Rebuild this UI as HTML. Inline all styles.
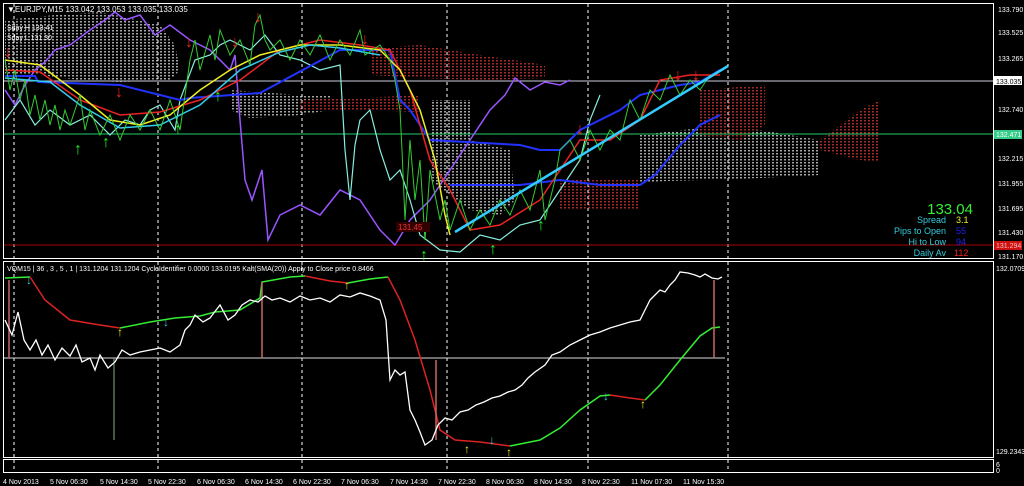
<!DOCTYPE html>
<html><head><meta charset="utf-8"><style>
body{margin:0;background:#000;width:1024px;height:486px;overflow:hidden;font-family:"Liberation Sans",sans-serif}
svg{display:block}
text{font-family:"Liberation Sans",sans-serif}
</style></head><body>
<svg width="1024" height="486" viewBox="0 0 1024 486">
<defs>
<pattern id="pw" width="4" height="3" patternUnits="userSpaceOnUse"><rect width="2" height="1.5" fill="#ccc"/></pattern>
<pattern id="pr" width="4" height="3" patternUnits="userSpaceOnUse"><rect width="2" height="1.5" fill="#c33"/></pattern>
</defs>
<rect width="1024" height="486" fill="#000"/>
<rect x="3.5" y="3.5" width="990" height="255" fill="none" stroke="#fff" stroke-width="1"/>
<rect x="3.5" y="261.5" width="990" height="196" fill="none" stroke="#fff" stroke-width="1"/>
<rect x="3.5" y="459.5" width="990" height="13" fill="none" stroke="#fff" stroke-width="1"/>
<g opacity="0.8">
<path d="M5 20 L55 15 L100 12 L130 18 L160 25 L175 45 L180 70 L170 80 L120 82 L80 80 L40 75 L5 75Z" fill="url(#pw)"/>
<path d="M230 90 L300 95 L330 95 L330 110 L300 115 L250 118 L230 110Z" fill="url(#pw)"/>
<path d="M370 48 L420 45 L480 55 L545 65 L545 78 L480 80 L420 78 L370 75Z" fill="url(#pr)"/>
<path d="M300 100 L360 98 L420 95 L420 112 L360 110 L300 110Z" fill="url(#pr)"/>
<path d="M430 100 L470 100 L470 140 L510 150 L515 200 L500 215 L470 210 L450 195 L430 180Z" fill="url(#pw)"/>
<path d="M560 180 L640 180 L640 210 L560 210Z" fill="url(#pr)"/>
<path d="M640 135 L700 128 L760 130 L820 140 L820 175 L760 178 L700 180 L640 182Z" fill="url(#pw)"/>
<path d="M700 90 L765 85 L765 125 L740 140 L700 135Z" fill="url(#pr)"/>
<path d="M820 140 L840 125 L860 110 L880 100 L880 162 L860 160 L820 150Z" fill="url(#pr)"/>
</g>
<g stroke="#fff" stroke-dasharray="3,3" stroke-width="1">
<line x1="14" y1="4" x2="14" y2="472"/><line x1="158" y1="4" x2="158" y2="472"/>
<line x1="302" y1="4" x2="302" y2="472"/><line x1="447" y1="4" x2="447" y2="472"/>
<line x1="588" y1="4" x2="588" y2="472"/><line x1="728" y1="4" x2="728" y2="472"/>
</g>
<line x1="4" y1="81" x2="993" y2="81" stroke="#ccd"/>
<line x1="4" y1="134" x2="993" y2="134" stroke="#2c6"/>
<line x1="4" y1="245" x2="993" y2="245" stroke="#a00"/>
<polyline fill="none" stroke="#95f" stroke-width="1.5" points="5,90 15,105 25,85 35,70 45,62 55,50 70,45 90,30 105,20 115,12 125,20 140,15 155,35 170,25 190,40 210,50 230,70 235,55 240,120 245,180 252,200 262,170 268,240 280,215 300,205 320,215 340,190 360,200 380,230 395,245 410,220 430,200 450,170 470,140 490,110 505,95 515,78 530,90 545,82 560,85 570,80"/>
<polyline fill="none" stroke="#8ed" stroke-width="1.2" points="5,120 20,100 35,125 50,110 70,125 90,115 110,135 125,120 140,125 150,110 160,105 175,130 180,100 195,60 210,55 220,45 230,40 250,50 265,35 280,55 300,60 320,70 340,65 345,150 350,200 355,145 360,120 370,110 380,150 390,180 400,170 410,200 420,235 440,250 460,252 480,235 500,240 520,225 540,220 560,190 580,160 590,120 600,95"/>
<polyline fill="none" stroke="#23f" stroke-width="2" points="5,76 35,76 38,82 120,85 180,100 190,98 260,93 340,50 390,50 400,100 410,110 430,140 520,145 540,150 560,150 580,130 600,120 620,110 640,95 660,90 680,85 700,82 720,70"/>
<polyline fill="none" stroke="#23f" stroke-width="2" points="450,185 520,185 560,180 600,185 640,185 655,175 680,145 700,125 720,115"/>
<polyline fill="none" stroke="#e22" stroke-width="1.5" points="5,70 40,72 80,100 120,115 160,112 200,100 240,80 280,50 320,40 360,45 390,50 410,90 430,160 450,190 470,230 500,225 540,200 560,170 580,140 610,140 640,120 660,80 690,75 720,75"/>
<polyline fill="none" stroke="#ee2" stroke-width="1.5" points="5,60 40,65 80,95 110,120 140,125 170,115 200,90 230,70 260,55 300,45 340,45 380,50 400,70 420,110 435,160 445,215 450,235"/>
<polyline fill="none" stroke="#3ce" stroke-width="1.5" points="5,78 50,82 80,105 120,128 160,125 200,105 240,70 280,52 310,45 340,48 380,55"/>
<polyline fill="none" stroke="#3c3" stroke-width="1" points="5,60 10,90 15,70 20,100 25,80 30,115 35,95 40,120 45,100 50,125 55,105 60,130 65,110 70,125 80,95 85,130 90,110 100,135 110,115 120,140 130,115 140,130 150,110 160,130 170,100 180,130 190,60 195,40 200,70 210,35 215,60 220,30 230,55 240,40 250,65 255,25 260,15 265,40 270,50 280,40 290,60 300,40 310,55 320,35 330,60 340,40 350,55 360,30 365,55 380,45 390,60 395,80 400,110 402,150 405,220 410,140 415,200 420,160 425,240 430,170 440,220 445,200 450,230 460,200 470,230 480,210 490,225 500,200 510,215 520,190 530,210 540,170 545,220 555,180 560,150 570,140 580,160 590,130 600,150 610,130 620,140 630,100 640,120 650,90 660,100 670,75 680,95 690,80 700,90 710,75"/>
<line x1="455" y1="232" x2="728" y2="66" stroke="#3cf" stroke-width="2.5"/>
<g font-size="16" font-weight="bold" fill="#2e2"><text x="74" y="154">↑</text><text x="102" y="147">↑</text><text x="174" y="134">↑</text><text x="214" y="101">↑</text><text x="420" y="260">↑</text><text x="489" y="254">↑</text><text x="537" y="230">↑</text></g>
<g font-size="16" font-weight="bold" fill="#e22"><text x="254" y="22">↓</text><text x="185" y="47">↓</text><text x="231" y="47">↓</text><text x="361" y="44">↓</text><text x="115" y="97">↓</text><text x="576" y="134">↓</text><text x="674" y="80">↓</text><text x="692" y="80">↓</text><text x="4" y="57">↓</text></g>
<text x="7" y="12" font-size="8" fill="#fff">▼EURJPY,M15  133.042 133.053 133.035 133.035</text>
<text x="7" y="30" font-size="7" fill="#fff">Sday H 133.41</text>
<text x="7" y="40" font-size="7" fill="#fff">Sday L 131.30</text>
<rect x="396" y="222" width="34" height="10" fill="#300"/><text x="398" y="230" font-size="8" fill="#e33">131.45</text>
<text x="973" y="214" font-size="15" fill="#3e3" text-anchor="end">133.04</text>
<text x="946" y="223" font-size="9" fill="#3cd" text-anchor="end">Spread</text><text x="956" y="223" font-size="9" fill="#ee2">3.1</text>
<text x="946" y="234" font-size="9" fill="#3cd" text-anchor="end">Pips to Open</text><text x="956" y="234" font-size="9" fill="#22e">55</text>
<text x="946" y="245" font-size="9" fill="#3cd" text-anchor="end">Hi to Low</text><text x="956" y="245" font-size="9" fill="#22e">94</text>
<text x="946" y="256" font-size="9" fill="#3cd" text-anchor="end">Daily Av</text><text x="954" y="256" font-size="9" fill="#e22">112</text>
<g font-size="7" fill="#fff">
<text x="998" y="12">133.790</text><text x="998" y="35">133.525</text><text x="998" y="61">133.265</text>
<text x="998" y="112">132.740</text><text x="998" y="161">132.215</text><text x="998" y="186">131.955</text>
<text x="998" y="211">131.695</text><text x="998" y="235">131.430</text><text x="998" y="259">131.170</text>
<text x="996" y="271">132.0709</text><text x="996" y="454">129.2343</text>
<text x="996" y="467">6</text><text x="996" y="473">0</text>
</g>
<rect x="994" y="76" width="28" height="9" fill="#fff"/><text x="996" y="84" font-size="7" fill="#000">133.035</text>
<rect x="994" y="130" width="28" height="9" fill="#3c8"/><text x="996" y="137" font-size="7" fill="#fff">132.471</text>
<rect x="994" y="241" width="28" height="9" fill="#c11"/><text x="996" y="248" font-size="7" fill="#fbb">131.294</text>
<text x="7" y="271" font-size="7" fill="#fff">VQM15 | 36 , 3 , 5 , 1 | 131.1204 131.1204  CycleIdentifier 0.0000 133.0195  Kalt(SMA(20)) Apply to Close price 0.8466</text>
<line x1="4" y1="358" x2="725" y2="358" stroke="#ddd"/>
<polyline fill="none" stroke="#3e3" stroke-width="1.5" points="5,278 30,277"/>
<polyline fill="none" stroke="#d22" stroke-width="1.5" points="30,277 45,300 70,320 100,325 120,328"/>
<polyline fill="none" stroke="#3e3" stroke-width="1.5" points="120,328 150,322 175,318 200,316 215,312 240,310 260,298 262,282 290,277 305,276"/>
<polyline fill="none" stroke="#d22" stroke-width="1.5" points="305,276 330,281 348,283"/>
<polyline fill="none" stroke="#3e3" stroke-width="1.5" points="348,283 370,279 388,277"/>
<polyline fill="none" stroke="#d22" stroke-width="1.5" points="388,277 400,300 415,340 430,390 440,430 455,440 480,442 510,446"/>
<polyline fill="none" stroke="#3e3" stroke-width="1.5" points="510,446 540,440 560,428 580,410 600,396 610,395"/>
<polyline fill="none" stroke="#d22" stroke-width="1.5" points="610,395 630,398 645,400"/>
<polyline fill="none" stroke="#3e3" stroke-width="1.5" points="645,400 660,385 680,360 700,336 712,328 720,327"/>
<g stroke="#c66" stroke-width="1.5"><line x1="9" y1="280" x2="9" y2="358"/><line x1="262" y1="282" x2="262" y2="358"/><line x1="436" y1="360" x2="436" y2="440"/><line x1="714" y1="280" x2="714" y2="358"/></g>
<line x1="114" y1="358" x2="114" y2="440" stroke="#8a8"/>
<polyline fill="none" stroke="#fff" stroke-width="1.3" points="5,320 12,335 18,312 24,340 30,350 36,340 42,355 48,345 55,360 62,348 70,356 76,345 82,362 90,358 95,370 100,355 108,368 115,362 122,350 130,355 140,352 150,350 160,348 170,352 180,345 185,330 190,325 195,315 203,322 210,318 220,305 228,320 235,315 242,305 250,300 258,302 265,296 272,300 280,298 290,302 300,296 310,300 320,298 330,302 340,295 350,297 360,293 370,296 380,300 386,320 390,380 395,370 400,375 405,372 410,410 415,420 420,432 425,445 432,440 438,425 445,418 452,420 460,412 468,410 476,405 484,402 492,398 500,396 508,392 515,390 522,385 528,378 535,372 545,365 552,355 560,352 570,345 580,340 590,335 600,332 610,328 620,325 630,322 640,320 645,310 650,300 655,295 660,290 665,292 670,285 675,280 680,272 688,273 695,275 700,277 705,274 712,278 718,279 722,277"/>
<g font-size="12" font-weight="bold"><text x="26" y="284" fill="#3cd">↓</text><text x="163" y="326" fill="#3cd">↓</text><text x="489" y="444" fill="#3cd">↓</text><text x="603" y="400" fill="#3cd">↓</text><text x="117" y="336" fill="#ee2">↑</text><text x="344" y="289" fill="#ee2">↑</text><text x="464" y="453" fill="#ee2">↑</text><text x="506" y="456" fill="#ee2">↑</text><text x="640" y="408" fill="#ee2">↑</text></g>
<g font-size="7" fill="#fff"><text x="3" y="484">4 Nov 2013</text><text x="50" y="484">5 Nov 06:30</text><text x="100" y="484">5 Nov 14:30</text><text x="148" y="484">5 Nov 22:30</text><text x="197" y="484">6 Nov 06:30</text><text x="245" y="484">6 Nov 14:30</text><text x="293" y="484">6 Nov 22:30</text><text x="341" y="484">7 Nov 06:30</text><text x="390" y="484">7 Nov 14:30</text><text x="438" y="484">7 Nov 22:30</text><text x="486" y="484">8 Nov 06:30</text><text x="534" y="484">8 Nov 14:30</text><text x="582" y="484">8 Nov 22:30</text><text x="631" y="484">11 Nov 07:30</text><text x="683" y="484">11 Nov 15:30</text></g>
</svg>
</body></html>
